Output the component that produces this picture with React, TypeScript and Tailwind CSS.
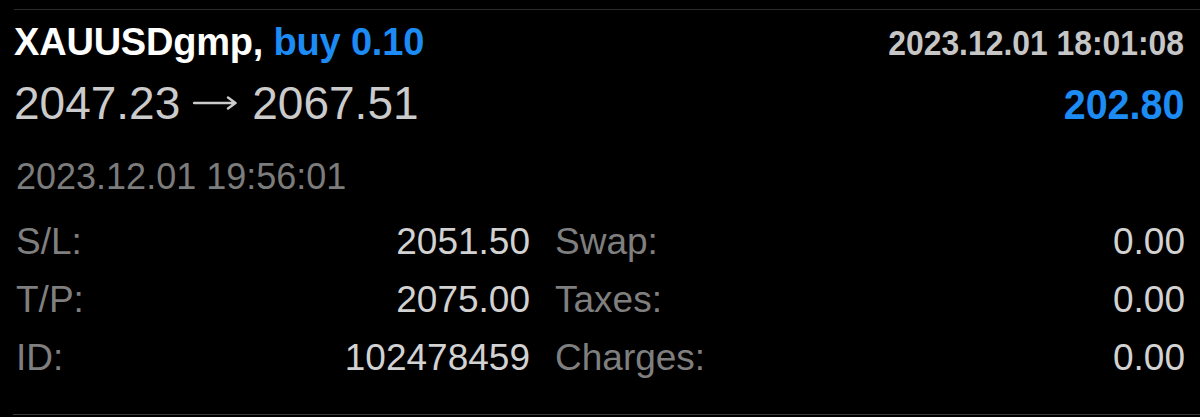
import React from 'react';

// ---------------------------------------------------------------------------
// Data
// ---------------------------------------------------------------------------

interface Field {
  label: string;
  value: string;
}

const leftFields: Field[] = [
  { label: 'S/L:', value: '2051.50' },
  { label: 'T/P:', value: '2075.00' },
  { label: 'ID:', value: '102478459' },
];

const rightFields: Field[] = [
  { label: 'Swap:', value: '0.00' },
  { label: 'Taxes:', value: '0.00' },
  { label: 'Charges:', value: '0.00' },
];

// ---------------------------------------------------------------------------
// Components
// ---------------------------------------------------------------------------

function FieldRow({ label, value }: Field) {
  return (
    <div className="flex items-baseline justify-between h-[58px] leading-[58px]">
      <span className="text-[#7f7f7f]">{label}</span>
      <span className="text-[#d2d2d2]">{value}</span>
    </div>
  );
}

function LongArrow() {
  return (
    <svg
      width="44"
      height="20"
      viewBox="0 0 44 20"
      className="inline-block align-[6px] ml-[13px] mr-[15px]"
      aria-hidden
    >
      <path
        d="M1 10H42.5M35 4.5L42.5 10L35 15.5"
        fill="none"
        stroke="#cbcbcb"
        strokeWidth="2.4"
        strokeLinecap="round"
        strokeLinejoin="round"
      />
    </svg>
  );
}

export default function App() {
  return (
    <div
      className="w-[1200px] h-[417px] bg-black overflow-hidden"
      style={{ fontFamily: '"Liberation Sans", Arial, sans-serif' }}
    >
      {/* top divider */}
      <div className="h-[9px]" />
      <div className="ml-[14px] border-t border-[#2c2c2c]" />

      {/* Header: symbol + open time */}
      <div className="flex items-baseline justify-between pl-[14px] pr-[16px] h-[64px] leading-[64px]">
        <span className="text-[38px] font-bold text-white tracking-[-0.2px]">
          XAUUSDgmp, <span className="text-[#1c8cf4]">buy 0.10</span>
        </span>
        <span className="inline-block origin-right scale-x-[0.91] text-[35px] font-bold text-[#c6c6c6]">
          2023.12.01 18:01:08
        </span>
      </div>

      {/* Prices + profit */}
      <div className="flex items-baseline justify-between pl-[14px] pr-[16px] h-[59px] leading-[59px]">
        <span className="text-[46px] text-[#cbcbcb]">
          2047.23
          <LongArrow />
          2067.51
        </span>
        <span className="inline-block origin-right scale-x-[0.94] text-[42px] font-bold text-[#1c8cf4]">
          202.80
        </span>
      </div>

      {/* Close time */}
      <div className="mt-[24px] pl-[16px] h-[40px] leading-[40px] text-[36px] text-[#7c7c7c]">
        2023.12.01 19:56:01
      </div>

      {/* Details */}
      <div className="mt-[16px] flex pl-[16px] pr-[15px] text-[37px]">
        <div className="w-[514px]">
          {leftFields.map((f) => (
            <FieldRow key={f.label} {...f} />
          ))}
        </div>
        <div className="flex-1 ml-[25px]">
          {rightFields.map((f) => (
            <FieldRow key={f.label} {...f} />
          ))}
        </div>
      </div>

      {/* bottom divider */}
      <div className="mt-[27px] ml-[13px] border-t border-[#3a3a3a]" />
    </div>
  );
}
